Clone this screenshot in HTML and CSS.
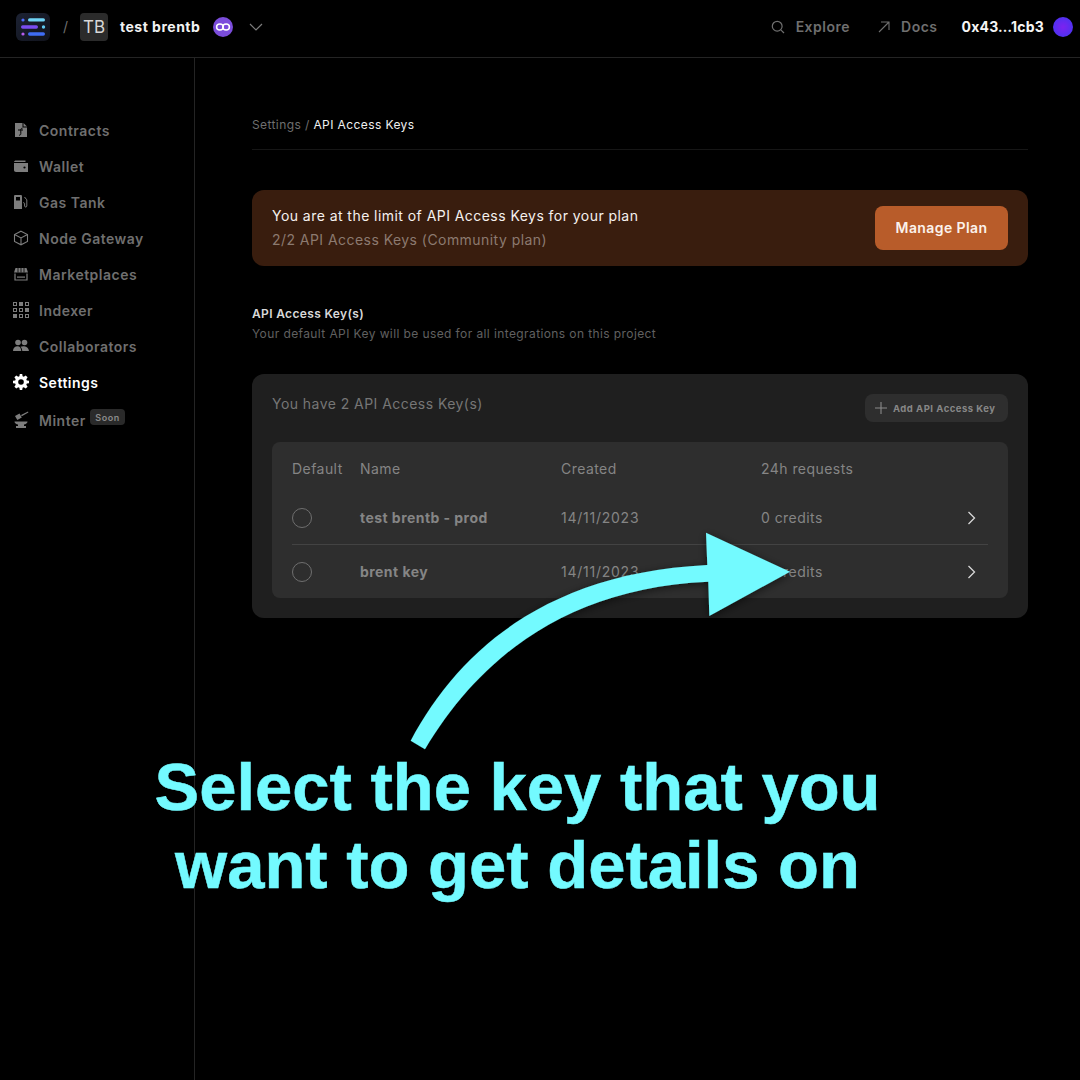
FILE: index.html
```html
<!DOCTYPE html>
<html lang="en">
<head>
<meta charset="utf-8">
<title>API Access Keys</title>
<link rel="stylesheet" href="styles.css">
</head>
<body>
<header class="topbar">
  <div class="top-left">
    <svg class="logo" width="34" height="28" viewBox="0 0 34 28">
      <defs>
        <linearGradient id="lg" x1="0" y1="0" x2="1" y2="1"><stop offset="0" stop-color="#1c2233"/><stop offset="1" stop-color="#11131c"/></linearGradient>
      </defs>
      <rect width="34" height="28" rx="6" fill="url(#lg)"/>
      <circle cx="7" cy="7" r="1.600" fill="#4d6bff"/>
      <rect x="12" y="5.200" width="17" height="3.400" rx="1.700" fill="#6fd3f5"/>
      <rect x="5" y="12.300" width="17" height="3.400" rx="1.700" fill="#7a4df0"/>
      <circle cx="27.500" cy="14" r="1.700" fill="#5ec8f2"/>
      <circle cx="7" cy="21" r="1.600" fill="#b65df0"/>
      <rect x="12" y="19.300" width="17" height="3.400" rx="1.700" fill="#3f6df5"/>
    </svg>
    <span class="slash">/</span>
    <span class="tb">TB</span>
    <span class="project">test brentb</span>
    <svg class="chain" width="20" height="20" viewBox="0 0 20 20">
      <circle cx="10" cy="10" r="10" fill="#7b4ddb"/>
      <g fill="none" stroke="#fff" stroke-width="1.500">
        <ellipse cx="6.900" cy="10" rx="3.300" ry="3"/>
        <ellipse cx="13.100" cy="10" rx="3.300" ry="3"/>
      </g>
    </svg>
    <svg class="chev-down" width="14" height="8" viewBox="0 0 14 8"><path d="M1 1l6 6 6-6" fill="none" stroke="#7d7d7d" stroke-width="1.200"/></svg>
  </div>
  <nav class="top-right">
    <a class="top-link">
      <svg width="14" height="14" viewBox="0 0 14 14"><circle cx="6.200" cy="6.200" r="4.900" fill="none" stroke="#6f6f6f" stroke-width="1.200"/><path d="M9.800 9.800 13 13" stroke="#6f6f6f" stroke-width="1.200"/></svg>
      <span>Explore</span>
    </a>
    <a class="top-link docs">
      <svg width="12" height="12" viewBox="0 0 12 12"><path d="M1 11 11 1M3 1h8v8" fill="none" stroke="#6f6f6f" stroke-width="1.100"/></svg>
      <span>Docs</span>
    </a>
    <span class="address">0x43…1cb3</span>
    <span class="avatar"></span>
  </nav>
</header>

<div class="shell">
  <aside class="sidebar">
    <a class="nav-item">
      <svg class="nav-icon" width="16" height="16" viewBox="0 0 16 16"><path d="M2 1h7.500v4.500H14V15H2z" fill="#7d7d7d"/><path d="M10.500 1 14 4.500h-3.500z" fill="#7d7d7d"/><path d="M5 8h5M9.500 6.200c-1.400 0-1.700.8-1.700 2v3.500c0 1-.6 1.500-1.800 1.500" fill="none" stroke="#000" stroke-width="1"/></svg>
      <span>Contracts</span>
    </a>
    <a class="nav-item">
      <svg class="nav-icon" width="16" height="16" viewBox="0 0 16 16"><path d="M1 4.200C1 3 2 2.400 3 2.400h9.500V4H1z" fill="#7d7d7d"/><path d="M1 5h14v9H3c-1.200 0-2-.8-2-2z" fill="#7d7d7d"/><circle cx="11.500" cy="9.500" r="1.100" fill="#000"/></svg>
      <span>Wallet</span>
    </a>
    <a class="nav-item">
      <svg class="nav-icon" width="16" height="16" viewBox="0 0 16 16"><path d="M1 2.200C1 1.300 1.600 1 2.300 1h5.400C8.400 1 9 1.300 9 2.200V15H1z" fill="#7d7d7d"/><rect x="3" y="3" width="4" height="3.500" fill="#000"/><path d="M11.500 3l2.300 2.800V12c0 1.400-2.200 1.400-2.200 0V9.500c0-.8-1-.8-1.600-.8" fill="none" stroke="#7d7d7d" stroke-width="1"/></svg>
      <span>Gas Tank</span>
    </a>
    <a class="nav-item">
      <svg class="nav-icon" width="16" height="16" viewBox="0 0 16 16"><path d="M8 1.200 14.500 4.600v6.800L8 14.800 1.500 11.400V4.600zM1.500 4.600 8 8l6.500-3.400M8 8v6.800" fill="none" stroke="#7d7d7d" stroke-width="1.100"/></svg>
      <span>Node Gateway</span>
    </a>
    <a class="nav-item">
      <svg class="nav-icon" width="16" height="16" viewBox="0 0 16 16"><path d="M2.500 2h11L15 6.500H1z" fill="#7d7d7d"/><path d="M5 2v4.500M8 2v4.500M11 2v4.500" stroke="#000" stroke-width=".8"/><path d="M2 7.500v6.500h12V7.500" fill="none" stroke="#7d7d7d" stroke-width="1.200"/><path d="M4 10.500h8v1.200H4z" fill="#7d7d7d"/></svg>
      <span>Marketplaces</span>
    </a>
    <a class="nav-item">
      <svg class="nav-icon" width="16" height="16" viewBox="0 0 16 16" fill="#7d7d7d"><path d="M0 0h4v4H0zm1 1v2h2V1zM6 0h4v4H6zM12 0h4v4h-4zm1 1v2h2V1zM0 6h4v4H0zm1 1v2h2V7zM6 6h4v4H6zm1 1v2h2V7zM12 6h4v4h-4zM0 12h4v4H0zM6 12h4v4H6zm1 1v2h2v-2zM12 12h4v4h-4zm1 1v2h2v-2z" fill-rule="evenodd"/></svg>
      <span>Indexer</span>
    </a>
    <a class="nav-item">
      <svg class="nav-icon" width="16" height="16" viewBox="0 0 16 16" fill="#7d7d7d"><circle cx="5" cy="4.500" r="2.800"/><circle cx="11.500" cy="4.500" r="2.800"/><path d="M0 13c0-3 2-4.800 4.500-4.800S8 10 8.300 13zM9.300 13c-.2-1.800-.8-3.300-1.900-4.300.9-.4 2.400-.6 3.700-.5 2.800.2 4.700 2 4.900 4.800z"/></svg>
      <span>Collaborators</span>
    </a>
    <a class="nav-item active">
      <svg class="nav-icon" width="16" height="16" viewBox="0 0 16 16"><path d="M6.800 0h2.400l.4 2.200 1.200.5L12.700 1.400l1.900 1.900-1.300 1.900.5 1.200 2.200.4v2.400l-2.200.4-.5 1.200 1.300 1.900-1.900 1.900-1.900-1.300-1.200.5L9.200 16H6.800l-.4-2.200-1.200-.5-1.900 1.300-1.900-1.900 1.300-1.900-.5-1.200L0 9.200V6.800l2.200-.4.500-1.200-1.300-1.900 1.900-1.900 1.900 1.300 1.200-.5z" fill="#fff"/><circle cx="8" cy="8" r="2.800" fill="#000"/></svg>
      <span>Settings</span>
    </a>
    <a class="nav-item minter">
      <svg class="nav-icon" width="16" height="18" viewBox="0 0 16 18" fill="#7d7d7d"><path d="M2 5 6.500 2.500l2.300 4-4.500 2.500z"/><path d="M8 4 15 .5l.4 1.100-6.600 3.600z"/><path d="M1.500 10.500h13c0 1.800-1.800 2.800-3.500 3v1.500h2V17H3v-2h2v-1.500c-1.700-.2-3.500-1.200-3.500-3z"/></svg>
      <span>Minter</span>
      <span class="soon">Soon</span>
    </a>
  </aside>

  <main class="content">
    <div class="breadcrumb"><span class="crumb-muted">Settings /</span> API Access Keys</div>

    <section class="banner">
      <div class="banner-text">
        <p class="banner-title">You are at the limit of API Access Keys for your plan</p>
        <p class="banner-sub">2/2 API Access Keys (Community plan)</p>
      </div>
      <button class="manage">Manage Plan</button>
    </section>

    <h2 class="section-title">API Access Key(s)</h2>
    <p class="section-sub">Your default API Key will be used for all integrations on this project</p>

    <section class="card">
      <div class="card-head">
        <span class="card-title">You have 2 API Access Key(s)</span>
        <button class="add-key">
          <svg width="12" height="12" viewBox="0 0 12 12"><path d="M6 0v12M0 6h12" stroke="#8a8a8a" stroke-width="1.100"/></svg>
          <span>Add API Access Key</span>
        </button>
      </div>
      <div class="keys">
        <div class="row head"><span>Default</span><span>Name</span><span>Created</span><span>24h requests</span><span></span></div>
        <div class="row item sep">
          <span class="radio"></span><strong>test brentb - prod</strong><span class="date">14/11/2023</span><span>0 credits</span>
          <svg class="chev" width="9" height="14" viewBox="0 0 9 14"><path d="M1.500 1l6 6-6 6" fill="none" stroke="#d8d8d8" stroke-width="1.300"/></svg>
        </div>
        <div class="row item last">
          <span class="radio"></span><strong>brent key</strong><span class="date">14/11/2023</span><span>0 credits</span>
          <svg class="chev" width="9" height="14" viewBox="0 0 9 14"><path d="M1.500 1l6 6-6 6" fill="none" stroke="#d8d8d8" stroke-width="1.300"/></svg>
        </div>
      </div>
    </section>
  </main>
</div>

<svg class="arrow" width="1080" height="1080" viewBox="0 0 1080 1080">
  <defs>
    <filter id="sh" x="-10%" y="-10%" width="120%" height="120%"><feDropShadow dx="0" dy="2" stdDeviation="4" flood-color="#000" flood-opacity=".55"/></filter>
  </defs>
  <path filter="url(#sh)" fill="#73faff" d="M410.700 740.700C458 652 545 573 707.300 565L706 532.700 790 571.700 709.300 616 708.300 581.700C565 588 478 660 425 749.300Z"/>
</svg>
<div class="caption">
  <p>Select the key that you</p>
  <p>want to get details on</p>
</div>
</body>
</html>
```
FILE: styles.css
```css
* { box-sizing: border-box; }
html, body { margin: 0; padding: 0; }
body {
  width: 1080px;
  height: 1080px;
  overflow: hidden;
  position: relative;
  background: #000;
  color: #fff;
  font-family: Inter, "Liberation Sans", sans-serif;
  font-size: 14px;
}
p, h2 { margin: 0; }
button { font-family: inherit; border: 0; }

.topbar {
  height: 58px;
  border-bottom: 1px solid #242424;
  display: flex;
  justify-content: space-between;
  align-items: center;
  padding: 0 7px 4px 16px;
}
.top-left, .top-right { display: flex; align-items: center; }
.slash { color: #6f6f6f; margin-left: 13px; font-size: 14px; width: 17px; }
.tb {
  width: 28px;
  height: 28px;
  border-radius: 4px;
  background: #2b2b2b;
  color: #d8d8d8;
  font-size: 17px;
  display: flex;
  align-items: center;
  justify-content: center;
}
.project { margin-left: 12px; font-weight: 700; letter-spacing: .5px; color: #f2f2f2; width: 81px; white-space: nowrap; }
.chain { margin-left: 12px; }
.chev-down { margin-left: 16px; }
.top-link { display: flex; align-items: center; gap: 11px; color: #6f6f6f; font-weight: 600; letter-spacing: .5px; }
.top-link.docs { margin-left: 28px; gap: 11px; }
.address { margin-left: 24px; font-weight: 700; letter-spacing: .2px; color: #f5f5f5; }
.avatar {
  width: 20px;
  height: 20px;
  border-radius: 50%;
  margin-left: 9px;
  background: radial-gradient(circle at 50% 50%, #7d22f0 0%, #5a2df0 55%, #3d3cf0 100%);
}

.shell { display: flex; height: 1022px; }
.sidebar {
  width: 195px;
  border-right: 1px solid #242424;
  padding-top: 54px;
  flex-shrink: 0;
}
.nav-item {
  height: 36px;
  display: flex;
  align-items: center;
  padding-left: 13px;
  color: #6f6f6f;
  font-weight: 600;
  letter-spacing: .5px;
}
.nav-icon { width: 16px; margin-right: 10px; flex-shrink: 0; }
.nav-item.active { color: #fff; }
.nav-item.minter { position: relative; padding-top: 4px; }
.soon {
  position: absolute;
  left: 90px;
  top: 9px;
  width: 35px;
  height: 16px;
  border-radius: 4px;
  background: #2a2a2a;
  color: #8a8a8a;
  font-size: 9px;
  font-weight: 600;
  display: flex;
  align-items: center;
  justify-content: center;
}

.content { flex: 1; padding: 0 52px 0 57px; }
.breadcrumb {
  height: 92px;
  padding-top: 58px;
  border-bottom: 1px solid #161616;
  font-size: 12px;
  letter-spacing: .4px;
  color: #f0f0f0;
  line-height: 18px;
}
.crumb-muted { color: #6f6f6f; }
.banner {
  margin-top: 40px;
  height: 76px;
  border-radius: 12px;
  background: #391d0e;
  display: flex;
  justify-content: space-between;
  align-items: center;
  padding: 0 20px;
}
.banner-title { font-size: 14px; letter-spacing: .45px; color: #f5f1ee; line-height: 20px; }
.banner-sub { font-size: 14px; letter-spacing: .45px; color: #8c7a70; line-height: 20px; margin-top: 4px; }
.manage {
  width: 133px;
  height: 44px;
  border-radius: 8px;
  background: #b85c2a;
  color: #fbf2ec;
  font-size: 14px;
  font-weight: 600;
  letter-spacing: .4px;
  padding: 0 0 1px;
}
.section-title { margin-top: 38px; font-size: 12px; font-weight: 600; letter-spacing: .35px; color: #d8d8d8; line-height: 20px; }
.section-sub { font-size: 12px; letter-spacing: .4px; color: #606060; line-height: 20px; }
.card {
  margin-top: 30px;
  height: 244px;
  border-radius: 12px;
  background: #1f1f1f;
  padding: 20px;
}
.card-head { display: flex; justify-content: space-between; align-items: flex-start; height: 48px; }
.card-title { font-size: 14px; letter-spacing: .45px; color: #767676; line-height: 20px; }
.add-key {
  width: 143px;
  height: 28px;
  border-radius: 8px;
  background: #2e2e2e;
  color: #878787;
  font-size: 9.500px;
  font-weight: 700;
  letter-spacing: .5px;
  display: flex;
  align-items: center;
  padding: 0 0 0 10px;
  gap: 6px;
}
.keys { height: 156px; overflow: hidden; border-radius: 8px; background: #2e2e2e; padding: 0 20px; }
.row {
  display: grid;
  grid-template-columns: 68px 201px 200px 1fr 20px;
  align-items: center;
  font-size: 14px;
  letter-spacing: .45px;
  color: #858585;
}
.row.head { height: 49px; padding-top: 4px; padding-bottom: 1px; }
.row.item { height: 54px; }
.row.item.last { padding-bottom: 1px; }
.row.sep { border-bottom: 1px solid #434343; }
.row strong { font-weight: 700; letter-spacing: .45px; }
.date { letter-spacing: .75px; }
.radio { width: 20px; height: 20px; border-radius: 50%; border: 1px solid #6f6f6f; }
.chev { justify-self: end; margin-right: 12px; }

.arrow { position: absolute; left: 0; top: 0; }
.caption {
  position: absolute;
  left: 0;
  top: 748px;
  width: 1035px;
  text-align: center;
  color: #73faff;
  -webkit-text-stroke: .5px #73faff;
  font-family: "Liberation Sans", Arial, sans-serif;
  font-weight: 700;
  font-size: 67px;
  line-height: 78px;
}
```
